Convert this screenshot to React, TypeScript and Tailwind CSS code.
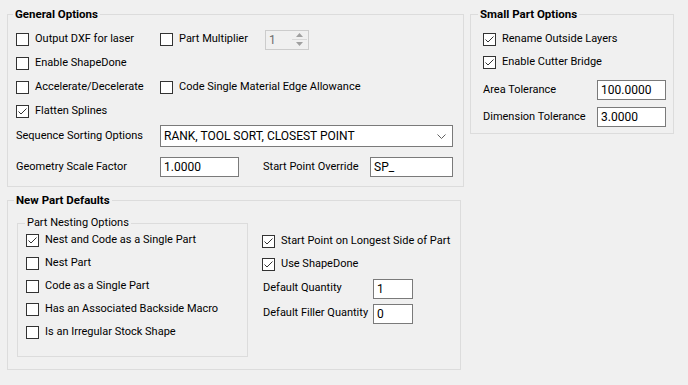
import React from 'react';

// Windows 10 style checkbox glyph
const Check: React.FC<{ checked?: boolean }> = ({ checked }) => (
  <span className="w-[13px] h-[13px] shrink-0 border border-[#333333] bg-white flex items-center justify-center">
    {checked && (
      <svg width="11" height="11" viewBox="0 0 11 11">
        <path d="M1.5 5.5 L4 8 L9.5 2.5" fill="none" stroke="#333333" strokeWidth="1" />
      </svg>
    )}
  </span>
);

const CheckRow: React.FC<{ label: string; checked?: boolean; className?: string }> = ({ label, checked, className }) => (
  <div className={`flex items-center gap-[6px] ${className ?? ''}`}>
    <Check checked={checked} />
    <span className="whitespace-nowrap">{label}</span>
  </div>
);

const TextBox: React.FC<{ value: string; className?: string }> = ({ value, className }) => (
  <div className={`h-[20px] shrink-0 border border-[#7a7a7a] bg-white pl-[3px] text-[12px] leading-[18px] whitespace-nowrap ${className ?? ''}`}>
    {value}
  </div>
);

const Group: React.FC<{
  title: string;
  bold?: boolean;
  legendOffset: string;
  className?: string;
  children: React.ReactNode;
}> = ({ title, bold, legendOffset, className, children }) => (
  <fieldset className={`border border-[#dcdcdc] ${className ?? ''}`}>
    <legend className={`${legendOffset} px-[2px] leading-[16px] ${bold ? 'font-bold text-[11.5px]' : ''}`}>{title}</legend>
    {children}
  </fieldset>
);

export default function App() {
  return (
    <div className="w-[688px] h-[385px] bg-[#f0f0f0] pt-[6px] pl-[7px] text-[11px] text-black font-['Segoe_UI',Roboto,sans-serif]">
      <div className="flex items-start gap-[6px]">
        {/* General Options */}
        <Group title="General Options" bold legendOffset="ml-[5px]" className="w-[457px] h-[181px]">
          <div className="pl-[8px] pt-[6px]">
            <div className="flex h-[23px] items-center">
              <CheckRow label="Output DXF for laser" className="w-[144px]" />
              <CheckRow label="Part Multiplier" className="w-[105px]" />
              <div className="w-[44px] h-[20px] border border-[#cccccc] bg-[#f0f0f0] flex">
                <span className="flex-1 pl-[3px] leading-[18px] text-[12px] text-[#6d6d6d]">1</span>
                <div className="w-[15px] flex flex-col my-[1px] mr-[1px]">
                  <div className="flex-1 flex items-center justify-center border-b border-[#d8d8d8]">
                    <svg width="7" height="4" viewBox="0 0 7 4"><path d="M0 4 L3.5 0 L7 4 Z" fill="#a0a0a0" /></svg>
                  </div>
                  <div className="flex-1 flex items-center justify-center">
                    <svg width="7" height="4" viewBox="0 0 7 4"><path d="M0 0 L3.5 4 L7 0 Z" fill="#a0a0a0" /></svg>
                  </div>
                </div>
              </div>
            </div>
            <div className="flex h-[24px] items-center">
              <CheckRow label="Enable ShapeDone" />
            </div>
            <div className="flex h-[24px] items-center">
              <CheckRow label="Accelerate/Decelerate" className="w-[144px]" />
              <CheckRow label="Code Single Material Edge Allowance" />
            </div>
            <div className="flex h-[24px] items-center">
              <CheckRow label="Flatten Splines" checked />
            </div>
            <div className="flex items-center mt-[2px] h-[22px]">
              <span className="w-[144px] whitespace-nowrap">Sequence Sorting Options</span>
              <div className="w-[293px] h-[22px] border border-[#7a7a7a] bg-white flex items-center pl-[3px] pr-[6px] text-[12px]">
                <span className="flex-1">RANK, TOOL SORT, CLOSEST POINT</span>
                <svg width="9" height="5" viewBox="0 0 9 5">
                  <path d="M0.5 0.5 L4.5 4.5 L8.5 0.5" fill="none" stroke="#606060" strokeWidth="1" />
                </svg>
              </div>
            </div>
            <div className="flex items-center mt-[10px] h-[20px]">
              <span className="w-[144px] whitespace-nowrap">Geometry Scale Factor</span>
              <TextBox value="1.0000" className="w-[79px]" />
              <span className="ml-[24px] w-[107px] whitespace-nowrap">Start Point Override</span>
              <TextBox value="SP_" className="w-[83px]" />
            </div>
          </div>
        </Group>

        {/* Small Part Options */}
        <Group title="Small Part Options" bold legendOffset="ml-[7px]" className="w-[204px] h-[128px]">
          <div className="pl-[12px] pt-[6px]">
            <div className="flex h-[23px] items-center">
              <CheckRow label="Rename Outside Layers" checked />
            </div>
            <div className="flex h-[23px] items-center">
              <CheckRow label="Enable Cutter Bridge" checked />
            </div>
            <div className="flex items-center mt-[6px] h-[20px]">
              <span className="w-[114px] whitespace-nowrap">Area Tolerance</span>
              <TextBox value="100.0000" className="w-[69px]" />
            </div>
            <div className="flex items-center mt-[7px] h-[20px]">
              <span className="w-[114px] whitespace-nowrap">Dimension Tolerance</span>
              <TextBox value="3.0000" className="w-[69px]" />
            </div>
          </div>
        </Group>
      </div>

      {/* New Part Defaults */}
      <Group title="New Part Defaults" bold legendOffset="ml-[6px]" className="mt-[5px] w-[454px] h-[178px]">
        <div className="flex items-start pl-[9px] pt-[7px]">
          <Group title="Part Nesting Options" legendOffset="ml-[7px]" className="w-[231px] h-[142px] shrink-0">
            <div className="pl-[8px] -mt-[2px]">
              <div className="flex h-[23px] items-center"><CheckRow label="Nest and Code as a Single Part" checked /></div>
              <div className="flex h-[23px] items-center"><CheckRow label="Nest Part" /></div>
              <div className="flex h-[23px] items-center"><CheckRow label="Code as a Single Part" /></div>
              <div className="flex h-[23px] items-center"><CheckRow label="Has an Associated Backside Macro" /></div>
              <div className="flex h-[23px] items-center"><CheckRow label="Is an Irregular Stock Shape" /></div>
            </div>
          </Group>
          <div className="ml-[14px] mt-[15px]">
            <div className="flex h-[23px] items-center"><CheckRow label="Start Point on Longest Side of Part" checked /></div>
            <div className="flex h-[23px] items-center"><CheckRow label="Use ShapeDone" checked /></div>
            <div className="flex h-[25px] items-center">
              <span className="w-[111px] pl-[1px] whitespace-nowrap">Default Quantity</span>
              <TextBox value="1" className="w-[40px]" />
            </div>
            <div className="flex h-[25px] items-center">
              <span className="w-[111px] pl-[1px] whitespace-nowrap">Default Filler Quantity</span>
              <TextBox value="0" className="w-[40px]" />
            </div>
          </div>
        </div>
      </Group>
    </div>
  );
}
